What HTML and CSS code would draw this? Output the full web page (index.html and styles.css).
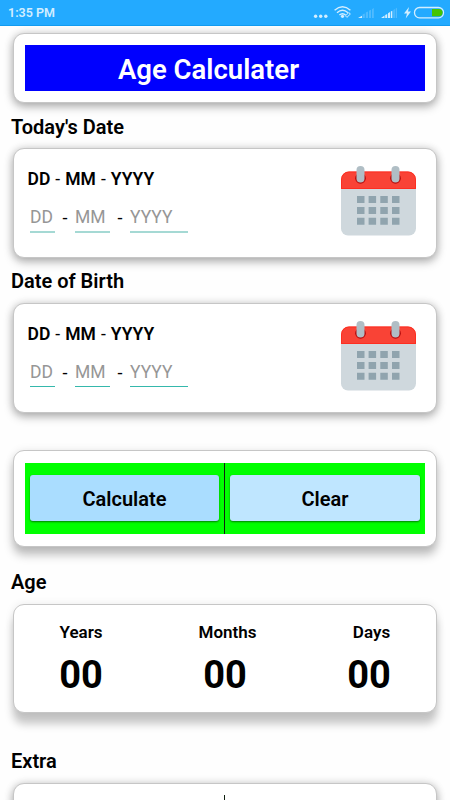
FILE: index.html
```html
<!DOCTYPE html>
<html lang="en">
<head>
<meta charset="utf-8">
<title>Age Calculater</title>
<link rel="stylesheet" href="styles.css">
</head>
<body>
<svg class="defs" width="0" height="0" aria-hidden="true">
  <symbol id="calendar" viewBox="0 0 75 70">
    <path fill="#cfd8dd" d="M0 22H75V62.500a7 7 0 0 1-7 7H7a7 7 0 0 1-7-7z"/>
    <path fill="#f94336" d="M0 23V13.500a8 8 0 0 1 8-8H67a8 8 0 0 1 8 8V23z"/>
    <path fill="none" stroke="#ff2a1c" stroke-width=".8" d="M.5 22.500V13.500a7.500 7.500 0 0 1 7.500-7.500H67a7.500 7.500 0 0 1 7.500 7.500V22.500z"/>
    <circle cx="19.500" cy="12.300" r="5.400" fill="#b50d0d"/>
    <circle cx="54.500" cy="12.300" r="5.400" fill="#b50d0d"/>
    <rect x="15.500" y="0" width="8" height="16.500" rx="4" fill="#b0bec5"/>
    <rect x="50.500" y="0" width="8" height="16.500" rx="4" fill="#b0bec5"/>
    <path fill="#90a4ae" d="M16 30h7.500v7H16zM27.600 30h7.500v7h-7.500zM39.300 30h7.500v7h-7.500zM51 30h7.500v7H51zM16 41h7.500v7H16zM27.600 41h7.500v7h-7.500zM39.300 41h7.500v7h-7.500zM51 41h7.500v7H51zM16 51.800h7.500v7H16zM27.600 51.800h7.500v7h-7.500zM39.300 51.800h7.500v7h-7.500zM51 51.800h7.500v7H51z"/>
  </symbol>
</svg>
<header class="status">
  <span class="time">1:35 PM</span>
  <svg class="indicators" width="138" height="25" viewBox="0 0 138 25">
    <g fill="#d3eeff">
      <circle cx="3.600" cy="16.200" r="1.700"/><circle cx="8.700" cy="16.200" r="1.700"/><circle cx="13.800" cy="16.200" r="1.700"/>
      <circle cx="30.500" cy="16.300" r="1.600"/>
    </g>
    <g fill="none" stroke="#d3eeff" stroke-width="1.400">
      <path d="M22.600 10.200Q30.500 3.200 38.400 10.200"/>
      <path d="M25 12.700Q30.500 7.800 36 12.700"/>
      <path d="M27.400 15Q30.500 12.300 33.600 15"/>
      <path stroke-width="1" d="M33.500 15.800l3.200-3.200 1.700 1.400-3.500 3.400z"/>
    </g>
    <path fill="#50bbff" d="M50.500 14.500l2.300-1V18h-2.300zM53.800 12.500l2.200-1V18h-2.200zM57 10.700l2-1V18h-2zM60 9.200l1.800-1.200V18H60z"/>
    <path fill="#d3eeff" d="M46 18l4-2.300V18zM69 18l3.500-2.500V18zM73.200 15l2-1V18h-2zM76 13.300l2-1.200V18h-2zM78.800 11.600l1.500-.9V18h-1.500z"/>
    <path fill="#50bbff" d="M81.300 10l1.600-1V18h-1.600zM83.700 8.700l1.300-1V18h-1.300z"/>
    <path fill="#d3eeff" d="M97 7L92 13.500h3L93.700 18.500 99 11.500H96z"/>
    <rect x="102.500" y="7.500" width="29" height="10.300" rx="5" fill="none" stroke="#d3eeff" stroke-width="1.300"/>
    <path fill="#45c400" d="M120 9H127a3.600 3.600 0 0 1 0 7.200H120z"/>
  </svg>
</header>
<main class="page">
  <section class="card card-title"><h1 class="title">Age Calculater</h1></section>

  <h2 class="heading heading-today">Today's Date</h2>
  <section class="card card-date">
    <div class="fields">
      <p class="format"><b>DD</b> - <b>MM</b> - <b>YYYY</b></p>
      <div class="entry faint">
        <span class="input day">DD</span><span class="dash">-</span><span class="input month">MM</span><span class="dash">-</span><span class="input year">YYYY</span>
      </div>
    </div>
    <svg class="calendar" width="75" height="70"><use href="#calendar"/></svg>
  </section>

  <h2 class="heading">Date of Birth</h2>
  <section class="card card-date">
    <div class="fields">
      <p class="format"><b>DD</b> - <b>MM</b> - <b>YYYY</b></p>
      <div class="entry">
        <span class="input day">DD</span><span class="dash">-</span><span class="input month">MM</span><span class="dash">-</span><span class="input year">YYYY</span>
      </div>
    </div>
    <svg class="calendar" width="75" height="70"><use href="#calendar"/></svg>
  </section>

  <section class="card card-actions">
    <div class="actions">
      <div class="cell"><button class="btn">Calculate</button></div>
      <div class="divider"></div>
      <div class="cell cell-wide"><button class="btn btn-light">Clear</button></div>
    </div>
  </section>

  <h2 class="heading heading-age">Age</h2>
  <section class="card card-age">
    <div class="unit"><span class="label">Years</span><span class="value">00</span></div>
    <div class="unit"><span class="label label-shift">Months</span><span class="value">00</span></div>
    <div class="unit"><span class="label label-shift">Days</span><span class="value">00</span></div>
  </section>

  <h2 class="heading heading-extra">Extra</h2>
  <section class="card card-extra"><div class="divider"></div></section>
</main>
</body>
</html>
```
FILE: styles.css
```css
* { box-sizing: border-box; }
html { overflow: hidden; }
body {
  margin: 0;
  height: 800px;
  overflow: hidden;
  background: #fefefe;
  color: #000;
  font-family: Roboto, sans-serif;
}
.defs { display: block; }
.status {
  display: flex;
  justify-content: space-between;
  height: 26px;
  padding: 0 0 0 8px;
  background: #23aaff;
  border-bottom: 1px solid #129bf0;
}
.time { color: #d3eeff; font-size: 12.500px; font-weight: 600; line-height: 26px; }
.indicators { display: block; }
.page { display: flex; flex-direction: column; height: 774px; overflow: hidden; padding: 7px 13px 0; }
.card {
  flex: none;
  background: #fff;
  border: 1px solid #c6c6c6;
  border-radius: 11px;
  box-shadow: 0 4px 10px rgba(0, 0, 0, 0.27), 0 0 9px rgba(0, 0, 0, 0.14);
}
.card-title { height: 70px; padding: 11px; }
.title {
  margin: 0;
  height: 46px;
  padding-right: 33px;
  background: #0000fe;
  color: #fff;
  font-size: 27.500px;
  font-weight: 600;
  line-height: 49px;
  text-align: center;
}
.heading {
  flex: none;
  margin: 0 0 0 -2px;
  height: 45px;
  font-size: 20px;
  font-weight: 600;
  line-height: 47px;
}
.heading-today { line-height: 49px; }
.card-date {
  display: flex;
  justify-content: space-between;
  height: 110px;
  padding: 18px 20px 0 13.500px;
}
.format { margin: 0; font-size: 17.500px; line-height: 24px; word-spacing: 0.700px; }
.format b { font-weight: 600; }
.entry { display: flex; margin: 13px 0 0 2.500px; }
.input {
  height: 28px;
  border-bottom: 1px solid #35b8ac;
  color: #969696;
  font-size: 17.500px;
  line-height: 27px;
}
.faint .input { height: 29px; border-bottom: 2px solid #a5d9d4; }
.day { width: 25px; }
.month { width: 35px; }
.year { width: 57.500px; }
.dash { width: 20px; font-size: 18px; line-height: 27px; text-align: center; }
.calendar { display: block; margin-top: -1px; }
.card-actions {
  height: 97px;
  margin-top: 37px;
  padding: 12px 11px;
  box-shadow: 0 8px 10px rgba(0, 0, 0, 0.25), 0 0 8px rgba(0, 0, 0, 0.08);
}
.actions { display: flex; height: 71px; background: #0f0; }
.cell { width: 199px; padding: 12px 5px; }
.cell-wide { width: 200px; }
.divider { width: 1px; background: #102010; }
.btn {
  display: block;
  width: 100%;
  height: 46px;
  padding: 2px 0 0;
  border: 0;
  border-radius: 3px;
  background: #aaddff;
  box-shadow: 0 1px 2px rgba(0, 0, 0, 0.5);
  color: #000;
  font: 600 20px Roboto, sans-serif;
}
.btn-light { background: #bfe6ff; }
.heading-age { height: 57px; line-height: 71px; }
.card-age {
  display: flex;
  justify-content: space-between;
  height: 109px;
  padding: 15px 34px 0;
  box-shadow: 0 11px 9px rgba(0, 0, 0, 0.22), 0 0 8px rgba(0, 0, 0, 0.08);
}
.unit { display: flex; flex-direction: column; align-items: center; width: 66px; }
.label { font-size: 17px; font-weight: 600; line-height: 24px; }
.label-shift { margin-left: 5px; }
.value { margin-top: 8px; font-size: 38px; font-weight: 700; line-height: 46px; }
.heading-extra { height: 70px; line-height: 96px; }
.card-extra { display: flex; justify-content: center; height: 108px; padding: 11px 1px 0 0; }
```
